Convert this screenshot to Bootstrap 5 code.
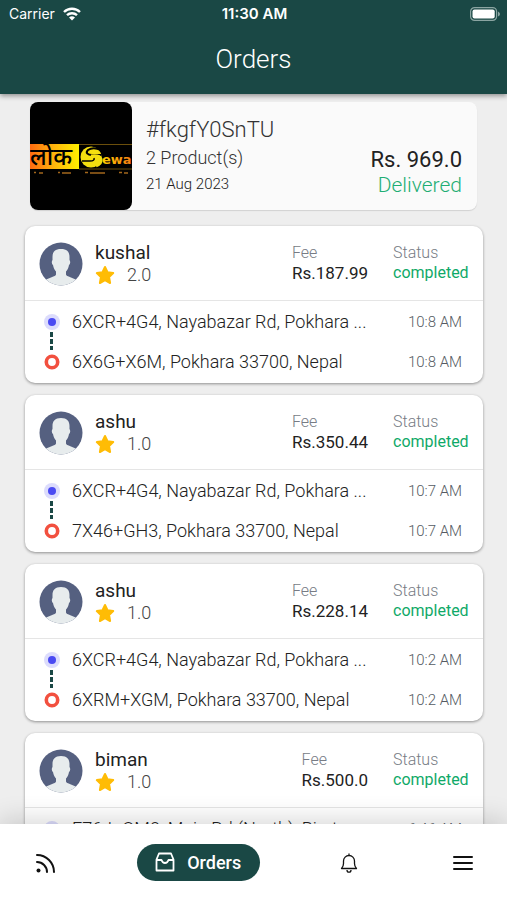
<!DOCTYPE html>
<html lang="en">
<head>
<meta charset="utf-8">
<meta name="viewport" content="width=device-width, initial-scale=1">
<title>Orders</title>
<link rel="stylesheet" href="https://cdn.jsdelivr.net/npm/bootstrap@5.3.0/dist/css/bootstrap.min.css">
<style>
  body { font-family: Roboto, "Liberation Sans", sans-serif; background: #eeeeee; color: #222; }
  .app-top { background: #1a4845; color: #fff; z-index: 2; height: 94px; box-shadow: 0 2px 5px rgba(0,0,0,.4); }
  .status-bar { font-family: Inter, sans-serif; font-size: 14px; line-height: 28px; padding: 0 7px 0 9px; }
  .clock { font-size: 15px; }
  .side { flex: 1 1 0; }
  .page-title { font-size: 26px; font-weight: 300; line-height: 36px; margin: 13px 0 0; }
  .feed { min-height: 0; padding: 8px 24px 0 25px; }
  .summary { background: #fafafa; border-radius: 8px; margin: 0 6px 16px 5px; box-shadow: 0 1px 1px rgba(0,0,0,.12); height: 108px; }
  .shop-logo { width: 102px; height: 108px; border-radius: 8px; background: #000; }
  .summary-text { padding: 14px 0 0 14px; }
  .order-id { font-size: 22px; font-weight: 300; line-height: 28px; color: #333; margin: 0; }
  .order-sub { font-size: 18px; font-weight: 300; line-height: 28px; color: #333; }
  .order-date { font-size: 15px; font-weight: 300; line-height: 24px; color: #222; }
  .summary-total { padding: 0 15px 13px 0; }
  .total { font-size: 22px; line-height: 27px; }
  .delivered { font-size: 21px; font-weight: 300; line-height: 24px; color: #1fae74; }
  .trip { border-radius: 10px; background: #fff; margin-bottom: 12px; box-shadow: 0 1px 3px rgba(0,0,0,.4); height: 157px; }
  .trip-head { height: 75px; padding: 16px 15px 0 14px; border-bottom: 1px solid #e5e5e5; }
  .person { font-size: 19px; font-weight: 400; line-height: 22px; margin: 0; }
  .rating { font-size: 18px; font-weight: 300; line-height: 22px; color: #444; }
  .tag { font-size: 16px; font-weight: 300; line-height: 21px; color: #777c85; }
  .fee { font-size: 17px; line-height: 21px; margin-right: 25px; }
  .state { font-size: 16px; line-height: 19px; color: #0fa968; width: 75px; }
  .stops { padding-top: 1px; }
  .stop { font-size: 18px; font-weight: 300; line-height: 40px; color: #222; padding: 0 21px 0 18px; }
  .stop time { font-size: 15px; color: #555b63; }
  .stop-mark { width: 18px; margin-right: 11px; }
  .route-line { left: 25px; top: 106px; width: 3px; height: 18px; background: repeating-linear-gradient(#1a4845 0 5px, transparent 5px 7px); }
  .tabs { height: 76px; background: #fff; z-index: 2; box-shadow: 0 -4px 24px rgba(0,0,0,.16); padding: 0 34px; }
  .tabs a { color: #111; }
  .tabs a.tab-on { background: #1a4845; color: #fff; border-radius: 19px; height: 37px; width: 123px; font-size: 18px; }
  .tab-menu { width: 34px; }
</style>
</head>
<body class="d-flex flex-column vh-100 overflow-hidden">
<header class="app-top position-relative flex-shrink-0">
  <div class="status-bar d-flex">
    <div class="side d-flex align-items-center">Carrier
      <svg class="ms-2" width="18" height="14" viewBox="0 0 18 14" fill="none" stroke="#fff" stroke-width="2.4"><path d="M1 5a11.500 11.500 0 0 1 16 0M4 8.200a7.200 7.200 0 0 1 10 0"/><path d="M9 13.500L6 10.500a4.500 4.500 0 0 1 6 0z" fill="#fff" stroke="none"/></svg>
    </div>
    <div class="clock fw-semibold">11:30 AM</div>
    <div class="side d-flex align-items-center justify-content-end">
      <svg width="30" height="14" viewBox="0 0 30 14"><rect x=".6" y=".6" width="26" height="12.800" rx="4" fill="none" stroke="#8ba5a2" stroke-width="1.200"/><rect x="2.500" y="2.500" width="22.200" height="9" rx="2" fill="#fff"/><path d="M28 4.500q2 1 2 2.500t-2 2.500z" fill="#8ba5a2"/></svg>
    </div>
  </div>
  <h1 class="page-title text-center">Orders</h1>
</header>

<main class="feed flex-fill overflow-hidden">
  <section class="summary d-flex">
    <svg class="shop-logo flex-shrink-0" viewBox="0 0 102 108" role="img" aria-label="Lok Sewa">
      <defs><linearGradient id="glow"><stop offset="0" stop-color="#ff6a10"/><stop offset=".5" stop-color="#ffb60c"/><stop offset="1" stop-color="#fff000"/></linearGradient>
      <linearGradient id="fade"><stop offset="0" stop-color="#ffd000"/><stop offset="1" stop-color="#f47a12"/></linearGradient></defs>
      <rect y="42" width="49" height="25" fill="url(#glow)"/>
      <path d="M49 42.500H102M49 67H102" stroke="#6b4f0c" stroke-width="1"/>
      <text x="0" y="63" font-family="Noto Sans, sans-serif" font-weight="500" font-size="24" fill="#000">लोक</text>
      <circle cx="61" cy="55" r="10.500" fill="#f4df10"/>
      <path d="M71 48q-8-3.500-13 0c-3 3 0 5 4 5h9" fill="none" stroke="#000" stroke-width="2"/>
      <path d="M52 59h8q5 0 4-3" fill="none" stroke="#000" stroke-width="1.500"/>
      <path d="M61 54q9-1 10 3t-5 7" fill="none" stroke="#f4df10" stroke-width="3"/>
      <text x="72" y="62" font-family="DejaVu Sans, sans-serif" font-weight="700" font-size="13" fill="url(#fade)">ewa</text>
      <path d="M4 70.500h2M9 71h4M28 70.500h2M32 71h9M55 70.500h3M60 71h15M89 70.500h3M94 71h4" stroke="#a3671c" stroke-width="1.500"/>
    </svg>
    <div class="summary-text flex-fill">
      <h2 class="order-id">#fkgfY0SnTU</h2>
      <div class="order-sub">2 Product(s)</div>
      <div class="order-date">21 Aug 2023</div>
    </div>
    <div class="summary-total text-end d-flex flex-column justify-content-end">
      <div class="total">Rs. 969.0</div>
      <div class="delivered">Delivered</div>
    </div>
  </section>
  <div id="trips"></div>
</main>

<nav class="tabs d-flex align-items-center justify-content-between flex-shrink-0 position-relative" aria-label="Main">
  <a href="#feed" aria-label="Feed"><svg width="22" height="22" viewBox="0 0 22 22" fill="none" stroke="currentColor" stroke-width="2" stroke-linecap="round"><path d="M3 3a17 17 0 0 1 17 17M3 10a10 10 0 0 1 10 10"/><circle cx="4.500" cy="18.500" r="2" fill="currentColor" stroke="none"/></svg></a>
  <a href="#orders" class="tab-on d-flex align-items-center justify-content-center text-decoration-none fw-medium" aria-current="page"><svg class="me-2" width="20" height="20" viewBox="0 0 20 20" fill="none" stroke="currentColor" stroke-width="1.800" stroke-linejoin="round"><path d="M4 1.500h12l2.500 6v11h-17v-11zM1.500 8h5q1 3 3.500 3t3.500-3h5"/></svg><span class="ms-1">Orders</span></a>
  <a href="#alerts" aria-label="Notifications"><svg width="18" height="22" viewBox="0 0 18 22" fill="none" stroke="currentColor" stroke-width="1.300" stroke-linejoin="round"><path d="M9 1.500v1.500M1.500 16.500q2-2 2-5V9a5.500 5.500 0 0 1 11 0v2.500q0 3 2 5zM7 18q0 2.200 2 2.200t2-2.200"/></svg></a>
  <a href="#menu" class="tab-menu text-end" aria-label="Menu"><svg width="20" height="16" viewBox="0 0 20 16" stroke="currentColor" stroke-width="2" stroke-linecap="round"><path d="M1 2h18M1 8h18M1 14h18"/></svg></a>
</nav>

<template id="trip">
  <article class="trip position-relative">
    <div class="trip-head d-flex">
      <svg class="flex-shrink-0" width="44" height="44" viewBox="0 0 44 44"><defs><clipPath id="round"><circle cx="22" cy="22" r="21.500"/></clipPath></defs><g clip-path="url(#round)"><path fill="#556080" d="M0 0h44v44H0z"/><path fill="#e7eced" d="M22 7c6 0 8.500 3 8.500 8v3c1 1 1 4-.5 5-.5 3-1.500 5-3 6.500v3c0 2 8 3.500 11 6V46H6v-7.500c3-2.500 11-4 11-6v-3c-1.500-1.500-2.500-3.500-3-6.500-1.500-1-1.500-4-.5-5v-3c0-5 2.500-8 8.500-8z"/></g></svg>
      <div class="flex-fill ps-2 ms-1">
        <h3 class="person" data-k="name"></h3>
        <div class="rating d-flex align-items-center"><svg class="me-2" width="20" height="20" viewBox="0 0 20 20"><path fill="#ffbc05" stroke="#ffbc05" stroke-width="2" stroke-linejoin="round" d="M10 2l2.500 5.300 5.700.8-4.100 4 1 5.900-5.100-2.800L4.900 18l1-5.900-4.100-4 5.700-.8z"/></svg><span class="ms-1" data-k="stars"></span></div>
      </div>
      <div class="fee"><div class="tag">Fee</div><span data-k="fee"></span></div>
      <div class="state"><div class="tag">Status</div>completed</div>
    </div>
    <div class="stops">
      <div class="stop d-flex align-items-center"><svg class="stop-mark" height="18" viewBox="0 0 18 18"><circle cx="9" cy="9" r="8" fill="#dcdcfc"/><circle cx="9" cy="9" r="4" fill="#4a4af2"/></svg><span class="flex-fill" data-k="from"></span><time data-k="at"></time></div>
      <div class="stop d-flex align-items-center" data-end><svg class="stop-mark" height="18" viewBox="0 0 18 18"><circle cx="9" cy="9" r="5.700" fill="#fff" stroke="#f2503f" stroke-width="3.600"/></svg><span class="flex-fill" data-k="to"></span><time data-k="at"></time></div>
    </div>
    <div class="route-line position-absolute"></div>
  </article>
</template>
<script src="https://cdn.jsdelivr.net/npm/bootstrap@5.3.0/dist/js/bootstrap.bundle.min.js"></script>
<script>
  const trips = [
    { name: "kushal", stars: "2.0", fee: "Rs.187.99", from: "6XCR+4G4, Nayabazar Rd, Pokhara ...", to: "6X6G+X6M, Pokhara 33700, Nepal", at: "10:8 AM" },
    { name: "ashu", stars: "1.0", fee: "Rs.350.44", from: "6XCR+4G4, Nayabazar Rd, Pokhara ...", to: "7X46+GH3, Pokhara 33700, Nepal", at: "10:7 AM" },
    { name: "ashu", stars: "1.0", fee: "Rs.228.14", from: "6XCR+4G4, Nayabazar Rd, Pokhara ...", to: "6XRM+XGM, Pokhara 33700, Nepal", at: "10:2 AM" },
    { name: "biman", stars: "1.0", fee: "Rs.500.0", from: "F76J+QM8, Main Rd (North), Birat...", at: "6:46 AM" }
  ];
  const tpl = document.getElementById("trip");
  for (const t of trips) {
    const card = tpl.content.cloneNode(true);
    if (!t.to) card.querySelector("[data-end]").remove();
    card.querySelectorAll("[data-k]").forEach(el => el.textContent = t[el.dataset.k]);
    document.getElementById("trips").append(card);
  }
</script>
</body>
</html>
